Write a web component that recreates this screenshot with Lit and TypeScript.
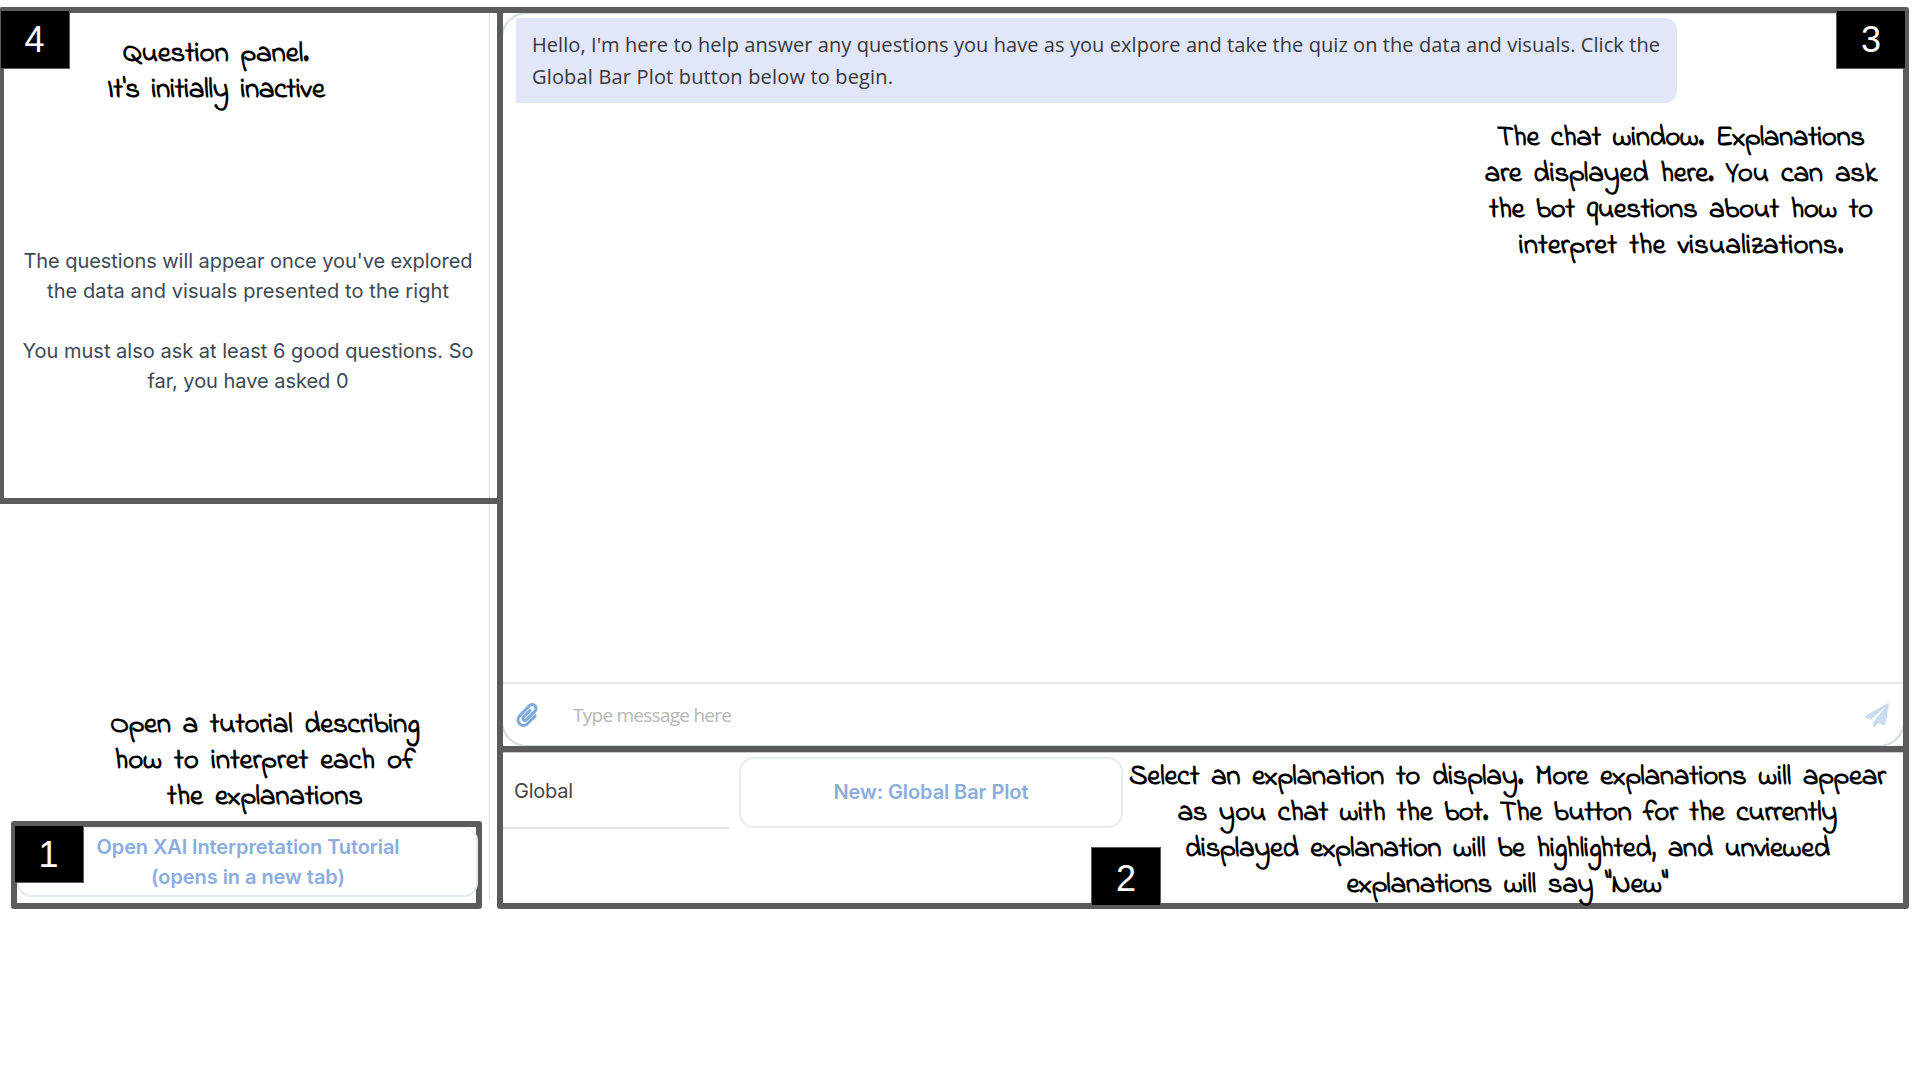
import { LitElement, html, css } from "lit";
import { customElement, property } from "lit/decorators.js";

/** One line of text whose letter-spacing is adjusted so it spans `span` pixels. */
@customElement("fit-line")
class FitLine extends LitElement {
  @property({ type: Number }) span = 0;
  @property() text = "";

  static styles = css`
    :host { display: block; white-space: pre; }
    .run { display: inline-block; }
  `;

  firstUpdated() {
    const run = this.renderRoot.querySelector(".run") as HTMLElement;
    const spacing = (this.span - run.getBoundingClientRect().width) / (this.text.length - 1);
    run.style.letterSpacing = `${spacing}px`;
    run.style.marginRight = `${-spacing}px`;
  }

  render() {
    return html`<span class="run">${this.text}</span>`;
  }
}

type Line = [string, number];

const lines = (items: Line[]) =>
  items.map(([text, span]) => html`<fit-line .text=${text} .span=${span}></fit-line>`);

@customElement("app-root")
class AppRoot extends LitElement {
  static styles = css`
    :host {
      display: block;
      position: relative;
      width: 1920px;
      height: 1080px;
      overflow: hidden;
      background: #fff;
      font-family: Inter, "Liberation Sans", sans-serif;
      font-size: 20px;
    }
    * { box-sizing: border-box; }
    .page { display: flex; padding-top: 7px; height: 909px; }
    .side { width: 497px; display: flex; flex-direction: column; background: linear-gradient(#dedfe1, #dedfe1) 489px 0 / 1.3px 892px no-repeat; }
    .questions {
      height: 497px; border: 6px solid #5b5b5b; border-left-width: 4px; border-right: 0;
      border-radius: 2px 0 0 0;
      padding: 233px 5px 0 0; text-align: center; line-height: 30px; color: #3b4957;
    }
    .gap { height: 30px; }
    .tutorial {
      margin: 317px 0 0 11px; width: 471px; height: 88px; border: 6px solid #5b5b5b; border-radius: 3px;
    }
    .tutorial-btn {
      height: 70px; margin-right: -2px; border: 2px solid #e5eaf0; border-top-color: #f3f5f8; border-radius: 14px;
      text-align: center; line-height: 30px; padding: 3px 0 0 1px; font-weight: 600; color: #8badde;
    }
    .main { width: 1412px; display: flex; flex-direction: column; border: 6px solid #5b5b5b; border-radius: 0 3px 3px 3px; }
    .chat { position: relative; height: 739px; flex: none; border-bottom: 6px solid #5b5b5b; overflow: hidden; display: flex; flex-direction: column; }
    .outline { position: absolute; inset: -1px -2px -1px -2px; border: 2px solid #d3dce4; border-radius: 26px; }
    .messages { height: 671px; padding: 5px 0 0 13px; border-bottom: 2px solid #e3e9ee; flex: none; }
    .bubble {
      width: 1161px; height: 85px; background: #e1e6f9; border-radius: 0 12px 12px 0; padding: 11px 0 0 16px;
      font-family: "Segoe UI", "Open Sans", "Noto Sans", sans-serif; line-height: 32px; color: #36383c;
    }
    .composer { display: flex; align-items: center; flex: 1; padding: 0 14px 0 13px; }
    .clip { width: 22px; height: 24px; fill: #7faade; }
    .placeholder { flex: 1; padding-left: 35px; font-family: "Segoe UI", "Open Sans", "Noto Sans", sans-serif; font-size: 19px; color: #b6b6b6; }
    .send { width: 24px; height: 24px; fill: #cadcf1; }
    .picker { display: flex; flex: 1; align-items: flex-start; padding-top: 5px; box-shadow: inset 0 1px #c9cac9; }
    .group { width: 226px; height: 72px; border-bottom: 2px solid #e3e3e3; padding: 19px 0 0 11px; line-height: 30px; color: #454545; }
    .plot-btn {
      margin-left: 10px; width: 384px; height: 71px; border: 2px solid #e6ebf1; border-radius: 15px;
      text-align: center; font-weight: 600; color: #8badde; line-height: 30px; padding-top: 18px;
    }
    .badge {
      position: absolute; width: 70px; height: 58px; background: #000; color: #fff; border: 1px solid #5b5b5b;
      font: 36px/58px "Liberation Sans", Arial, sans-serif; text-align: center;
    }
    .b1 { left: 14px; top: 825px; padding-right: 1px; }
    .b2 { left: 1091px; top: 847px; border-bottom: 0; line-height: 61px; }
    .b3 { left: 1836px; top: 11px; border-top: 0; }
    .b4 { left: 0; top: 11px; border-top: 0; padding-right: 1px; line-height: 58px; }
    .note {
      position: absolute; text-align: center; color: #000; white-space: nowrap; word-spacing: 5px;
      font: 700 29px/36px "Indie Flower", Lato, sans-serif;
    }
    .n1 { left: 65px; width: 400px; top: 706.5px; }
    .n2 { left: 1107.5px; width: 800px; top: 758.5px; }
    .n3 { left: 1480.5px; width: 401px; top: 119.5px; }
    .n4 { left: 66px; width: 300px; top: 35.5px; }
  `;

  render() {
    return html`
      <div class="page">
        <div class="side">
          <div class="questions">
            ${lines([["The questions will appear once you've explored", 449], ["the data and visuals presented to the right", 402]])}
            <div class="gap"></div>
            ${lines([["You must also ask at least 6 good questions. So", 451], ["far, you have asked 0", 201]])}
          </div>
          <div class="tutorial">
            <div class="tutorial-btn">${lines([["Open XAI Interpretation Tutorial", 303], ["(opens in a new tab)", 194]])}</div>
          </div>
        </div>
        <div class="main">
          <div class="chat">
            <div class="outline"></div>
            <div class="messages">
              <div class="bubble">
                ${lines([
                  ["Hello, I'm here to help answer any questions you have as you exlpore and take the quiz on the data and visuals. Click the", 1128],
                  ["Global Bar Plot button below to begin.", 361],
                ])}
              </div>
            </div>
            <div class="composer">
              <svg class="clip" viewBox="0 0 448 512"><path d="M43.246 466.142c-58.43-60.289-57.341-157.511 1.386-217.581L254.392 34c44.316-45.332 116.351-45.336 160.671 0 43.89 44.894 43.943 117.329 0 162.276L232.214 383.128c-29.855 30.537-78.633 30.111-107.982-.998-28.275-29.97-27.368-77.473 1.452-106.953l143.743-146.835c6.182-6.314 16.312-6.422 22.626-.241l22.861 22.379c6.315 6.182 6.422 16.312.241 22.626L171.427 319.927c-4.932 5.045-5.236 13.428-.648 18.292 4.372 4.634 11.245 4.711 15.688.165l182.849-186.851c19.613-20.062 19.613-52.725-.011-72.798-19.189-19.627-49.957-19.637-69.154 0L90.39 293.295c-34.763 35.56-35.299 93.12-1.191 128.313 34.01 35.093 88.985 35.137 123.058.286l172.06-175.999c6.177-6.319 16.307-6.433 22.626-.256l22.877 22.364c6.319 6.177 6.434 16.307.256 22.626l-172.06 175.998c-59.576 60.938-155.943 60.216-214.77-.485z"/></svg>
              <div class="placeholder">${lines([["Type message here", 159]])}</div>
              <svg class="send" viewBox="0 0 512 512"><path d="M476 3.2L12.5 270.6c-18.1 10.4-15.8 35.6 2.2 43.2L121 358.4l287.3-253.2c5.5-4.9 13.3 2.6 8.6 8.3L176 407v80.5c0 23.6 28.5 32.9 42.5 15.8L282 426l124.6 52.2c14.2 6 30.4-2.9 33-18.2l72-432C515 7.8 493.3-6.8 476 3.2z"/></svg>
            </div>
          </div>
          <div class="picker">
            <div class="group">${lines([["Global", 59]])}</div>
            <div class="plot-btn">${lines([["New: Global Bar Plot", 195]])}</div>
          </div>
        </div>
      </div>
      <div class="badge b1">1</div>
      <div class="badge b2">2</div>
      <div class="badge b3">3</div>
      <div class="badge b4">4</div>
      <div class="note n1">${lines([["Open a tutorial describing", 310], ["how to interpret each of", 301], ["the explanations", 196]])}</div>
      <div class="note n2">
        ${lines([
          ["Select an explanation to display. More explanations will appear", 757],
          ["as you chat with the bot. The button for the currently", 660],
          ["displayed explanation will be highlighted, and unviewed", 645],
          ["explanations will say \"New\"", 322],
        ])}
      </div>
      <div class="note n3">
        ${lines([
          ["The chat window. Explanations", 368],
          ["are displayed here. You can ask", 393],
          ["the bot questions about how to", 384],
          ["interpret the visualizations.", 325],
        ])}
      </div>
      <div class="note n4">${lines([["Question panel.", 186], ["It's initially inactive", 218]])}</div>
    `;
  }
}
